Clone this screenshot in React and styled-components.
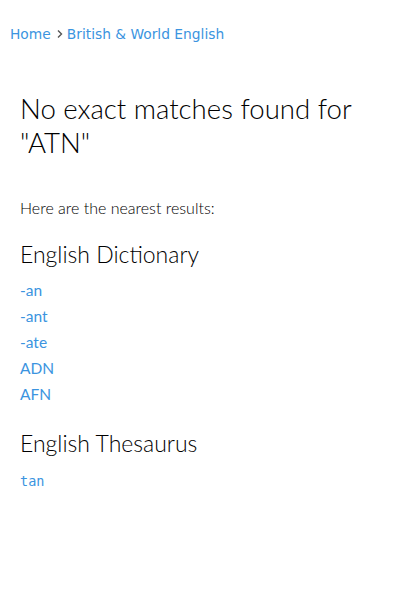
import React from "react";
import styled, { createGlobalStyle } from "styled-components";

const GlobalStyle = createGlobalStyle`
  html, body {
    margin: 0;
    padding: 0;
    background: #fff;
  }
`;

const Page = styled.div`
  width: 400px;
  min-height: 600px;
  background: #fff;
`;

const Breadcrumb = styled.nav`
  display: flex;
  align-items: center;
  padding: 25px 10px 0;
  font-family: "DejaVu Sans", sans-serif;
  font-size: 13.8px;
  line-height: 18px;
`;

const Crumb = styled.a`
  color: #3b94e0;
  text-decoration: none;
`;

const Chevron = styled.svg`
  width: 8px;
  height: 10px;
  margin: 0 3px 0 5px;
`;

const Main = styled.main`
  padding: 49px 20px 0;
  font-family: Lato, sans-serif;
  color: #000;
`;

const Title = styled.h1`
  margin: 0;
  font-size: 27.6px;
  font-weight: 300;
  line-height: 34px;
`;

const Intro = styled.p`
  margin: 38px 0 0;
  font-size: 16px;
  font-weight: 300;
  line-height: 20px;
`;

const SectionTitle = styled.h2`
  margin: ${(p) => p.$top}px 0 0;
  font-size: 23px;
  font-weight: 300;
  line-height: 28px;
`;

const List = styled.ul`
  list-style: none;
  margin: ${(p) => p.$top}px 0 0;
  padding: 0;
`;

const Item = styled.li`
  line-height: 26px;
  font-size: 15px;
`;

const Link = styled.a`
  color: #3b94e0;
  text-decoration: none;
  font-family: ${(p) => (p.$mono ? '"DejaVu Sans Mono", monospace' : "Lato, sans-serif")};
  font-size: ${(p) => (p.$mono ? "13.5px" : "15.5px")};
  font-weight: 400;
`;

const dictionary = ["-an", "-ant", "-ate", "ADN", "AFN"];
const thesaurus = ["tan"];

export default function App() {
  return (
    <Page>
      <GlobalStyle />
      <Breadcrumb>
        <Crumb href="#">Home</Crumb>
        <Chevron viewBox="0 0 8 10">
          <path d="M2 1.5 L5.5 5 L2 8.5" fill="none" stroke="#555" strokeWidth="1.4" />
        </Chevron>
        <Crumb href="#">British &amp; World English</Crumb>
      </Breadcrumb>
      <Main>
        <Title>No exact matches found for "ATN"</Title>
        <Intro>Here are the nearest results:</Intro>
        <SectionTitle $top={22}>English Dictionary</SectionTitle>
        <List $top={9}>
          {dictionary.map((w) => (
            <Item key={w}>
              <Link href="#">{w}</Link>
            </Item>
          ))}
        </List>
        <SectionTitle $top={22}>English Thesaurus</SectionTitle>
        <List $top={10}>
          {thesaurus.map((w) => (
            <Item key={w}>
              <Link href="#" $mono>
                {w}
              </Link>
            </Item>
          ))}
        </List>
      </Main>
    </Page>
  );
}
